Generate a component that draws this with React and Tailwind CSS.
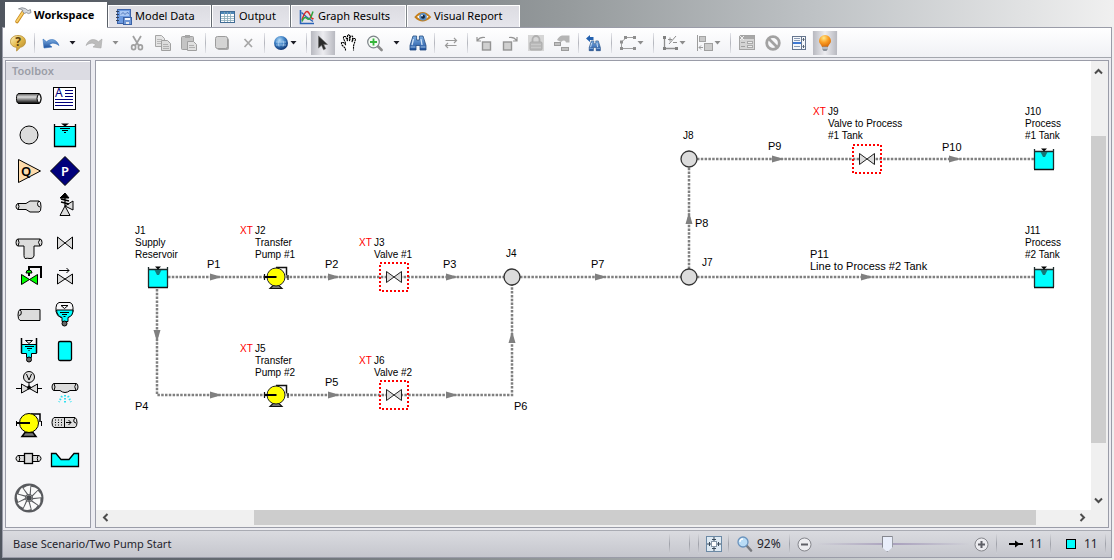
import React from 'react';
import clsx from 'clsx';

// Shared gradients for the toolbar and status bar drawings
const Gradients = () => (
  <svg className="absolute h-0 w-0" aria-hidden="true">
    <defs>
      <linearGradient id="gold" x1="0" y1="0" x2="1" y2="1">
        <stop offset="0" stopColor="#fdf3c0" />
        <stop offset="0.5" stopColor="#e2b84a" />
        <stop offset="1" stopColor="#b0842a" />
      </linearGradient>
      <linearGradient id="blue" x1="0" y1="0" x2="0" y2="1">
        <stop offset="0" stopColor="#7fb0e4" />
        <stop offset="1" stopColor="#1c4f9c" />
      </linearGradient>
      <radialGradient id="globe" cx="0.4" cy="0.3" r="0.7">
        <stop offset="0" stopColor="#b4dcf8" />
        <stop offset="0.5" stopColor="#3f82c6" />
        <stop offset="1" stopColor="#0f3674" />
      </radialGradient>
      <radialGradient id="bulb" cx="0.4" cy="0.25" r="0.75">
        <stop offset="0" stopColor="#ffe98a" />
        <stop offset="0.5" stopColor="#fb9f25" />
        <stop offset="1" stopColor="#d86a08" />
      </radialGradient>
      <linearGradient id="pipe" x1="0" y1="0" x2="0" y2="1">
        <stop offset="0" stopColor="#555555" />
        <stop offset="0.35" stopColor="#dddddd" />
        <stop offset="1" stopColor="#000000" />
      </linearGradient>
    </defs>
  </svg>
);

const Icon = ({ size = 18, children }) => (
  <svg
    width={size}
    height={size}
    viewBox={`0 0 ${size} ${size}`}
    fill="none"
    className="shrink-0"
    aria-hidden="true"
  >
    {children}
  </svg>
);

/* ---------- Tab icons ---------- */

const HammerIcon = () => (
  <Icon>
    <path d="M9.5 5.5L3 15.5" stroke="#c88a1e" strokeWidth="3.6" strokeLinecap="round" />
    <path d="M9.3 5.8L3 15.2" stroke="#f8cf6a" strokeWidth="2" strokeLinecap="round" />
    <path d="M4.5 2.8Q8 0.8 11.5 2.6L14 4.6L16.4 3.6L17 6.6L14.6 7.6L12.4 6.6L10.6 7.4L8.6 5.6L8.8 4.2Q6.6 3 4.5 2.8Z" fill="#d5d8dc" stroke="#7d838a" strokeWidth="0.8" />
  </Icon>
);

const ModelIcon = () => (
  <Icon>
    <rect x="2.5" y="1.5" width="13" height="14" fill="#6d9be0" stroke="#3c62a8" />
    <path d="M1 3.5h3M1 6.5h3M1 9.5h3M1 12.5h3" stroke="#34445f" />
    <rect x="5" y="3" width="9" height="5" fill="#a9c8f4" />
    <path d="M6 6.5l2-2 2 2 2-2 2 1" stroke="#3c62a8" strokeWidth="0.8" />
    <rect x="8.5" y="9.5" width="8" height="7" fill="#6f97d6" stroke="#3a62a6" />
    <rect x="10" y="10" width="5" height="2" fill="#f2f6fd" />
    <rect x="11" y="14" width="3" height="2" fill="#e3e8f0" />
  </Icon>
);

const TableIcon = () => (
  <Icon>
    <rect x="1.5" y="3.5" width="14" height="11" fill="#fdfdff" stroke="#3f6b94" />
    <rect x="2" y="4" width="13" height="2" fill="#4d87b8" />
    <path d="M2 8.5h13M2 10.5h13M2 12.5h13M5.5 4v10M8.5 4v10M11.5 4v10" stroke="#86a9b8" strokeWidth="0.8" />
  </Icon>
);

const GraphIcon = () => (
  <Icon>
    <path d="M2.5 2v13.5H16" stroke="#2a63b8" strokeWidth="1.6" />
    <path d="M3.5 4.5L8 8.5L15 13.5" stroke="#2a63b8" strokeWidth="1.4" />
    <path d="M4 12Q8 -1 11.5 6T15 10" stroke="#d92a2a" strokeWidth="1.5" />
    <path d="M4 13.5Q6 7.5 9 10.5T15 3.5" stroke="#2fa640" strokeWidth="1.5" />
  </Icon>
);

const EyeIcon = () => (
  <Icon>
    <path d="M1.5 9Q8.5 1 16 9Q8.5 16 1.5 9Z" fill="#fff" stroke="#c47f1c" strokeWidth="1.8" />
    <circle cx="9" cy="8.8" r="3.8" fill="#5b8fc4" />
    <circle cx="9" cy="8.8" r="2" fill="#10243c" />
    <circle cx="8" cy="7.6" r="0.9" fill="#fff" />
  </Icon>
);

/* ---------- Toolbar icons ---------- */

const HelpIcon = () => (
  <Icon>
    <path d="M9 1.5C13.5 1.5 16.5 4 16.5 7.6C16.5 11 14 12.8 11.4 13.3L7.6 17L7.8 13.4C4 13 1.5 11 1.5 7.6C1.5 4 4.5 1.5 9 1.5Z" fill="url(#gold)" stroke="#b58a2c" strokeWidth="0.8" />
    <text x="9" y="12" textAnchor="middle" className="fill-[#5c420c] text-[12px] font-bold">?</text>
  </Icon>
);

const UndoIcon = () => (
  <Icon>
    <path d="M1 5l1 9 8-1-2.8-2.2C10 8.4 13 8.6 17 11.5C14.5 4.8 8.5 4 4.6 7.8Z" fill="url(#blue)" stroke="#2f6cb8" strokeWidth="0.6" />
  </Icon>
);

const RedoIcon = () => (
  <Icon>
    <path d="M17 5l-1 9-8-1 2.8-2.2C8 8.4 5 8.6 1 11.5C3.5 4.8 9.5 4 13.4 7.8Z" fill="#bcbcbc" stroke="#a8a8a8" strokeWidth="0.6" />
  </Icon>
);

const CutIcon = () => (
  <Icon>
    <path d="M5 2l5.6 9.4M13 2L7.4 11.4" stroke="#a0a0a0" strokeWidth="1.8" />
    <ellipse cx="5.6" cy="13.2" rx="2" ry="2.4" stroke="#a0a0a0" strokeWidth="1.7" />
    <ellipse cx="12.4" cy="13.2" rx="2" ry="2.4" stroke="#a0a0a0" strokeWidth="1.7" />
  </Icon>
);

const CopyIcon = () => (
  <Icon>
    <path d="M1.5 1.5h6l3 3v8h-9z" fill="#e4e4e4" stroke="#a6a6a6" />
    <path d="M3 5.5h5M3 7.5h5M3 9.5h5" stroke="#b8b8b8" />
    <path d="M7.5 6.5h6l3 3v7h-9z" fill="#dcdcdc" stroke="#a0a0a0" />
    <path d="M9 10.5h5M9 12.5h6M9 14.5h6" stroke="#b0b0b0" />
  </Icon>
);

const PasteIcon = () => (
  <Icon>
    <rect x="1.5" y="2.5" width="12" height="13" rx="1" fill="#c4c4c4" stroke="#a0a0a0" />
    <rect x="5" y="1" width="5" height="3" fill="#a6a6a6" />
    <path d="M7.5 7.5h6l3 3v6h-9z" fill="#e0e0e0" stroke="#a0a0a0" />
    <path d="M9 11.5h5M9 13.5h6" stroke="#b0b0b0" />
  </Icon>
);

const DuplicateIcon = () => (
  <Icon>
    <rect x="4" y="4" width="12" height="12" rx="2" fill="#a8a8a8" />
    <rect x="2.5" y="2.5" width="12" height="12" rx="2" fill="#d4d4d4" stroke="#9c9c9c" />
  </Icon>
);

const DeleteIcon = () => (
  <Icon>
    <path d="M5.5 5l7.5 8M13 5l-7.5 8" stroke="#a6a6a6" strokeWidth="1.7" />
  </Icon>
);

const GlobeIcon = () => (
  <Icon>
    <circle cx="9" cy="9" r="7" fill="url(#globe)" />
    <path d="M4 8h10M4 11h10M7 6.5q-1.5 3 0 6M11 6.5q1.5 3 0 6" stroke="#b4d6f4" strokeWidth="0.7" />
  </Icon>
);

const PointerIcon = () => (
  <Icon>
    <path d="M4.5 2v12l3-2.8 2 4.6 2.2-1-2-4.4h3.8z" fill="#2b2b2b" stroke="#6a6a6a" strokeWidth="0.6" />
  </Icon>
);

const HandIcon = () => (
  <Icon>
    <path d="M5.5 16.5v-2L1.5 10.5V8.5h2L5.5 10.5V9L3.5 4.5V2.5h2L7.5 7V1.5L8.5 .7l1 .8V7l1.3-5h1.4l.6 1-.8 5 1.5-3.5h1.5l.5 1L13.5 12v4.5" fill="#fff" stroke="#000" strokeWidth="1.1" strokeDasharray="2 0.6" />
  </Icon>
);

const ZoomInIcon = () => (
  <Icon>
    <path d="M11.6 12l4 4" stroke="#8a8a8a" strokeWidth="2.6" strokeLinecap="round" />
    <circle cx="7.5" cy="8" r="5.8" fill="#f3fbf3" stroke="#7c8288" strokeWidth="1.2" />
    <path d="M7.5 4.5v7M4 8h7" stroke="#35b53a" strokeWidth="1.8" />
  </Icon>
);

const BinocularShape = () => (
  <>
    <path d="M4 2h3.6v4h2.8V2H14l3 9.5V16h-6v-4.5H7V16H1v-4.5z" fill="url(#blue)" stroke="#21497e" strokeWidth="0.8" />
    <path d="M4.5 5L3 11M12 5l1 6" stroke="#cfe2f7" strokeWidth="1.3" />
    <path d="M1.5 13h5M11.5 13h5" stroke="#9cc0e8" />
  </>
);

const BinocularsIcon = () => (
  <Icon>
    <BinocularShape />
  </Icon>
);

const FindPreviousIcon = () => (
  <Icon>
    <path d="M0 4.5L4 1v2h3.5v3H4v2z" fill="#2462b0" />
    <g transform="translate(2.5 5.5) scale(0.7)">
      <BinocularShape />
    </g>
  </Icon>
);

const SwapIcon = () => (
  <Icon>
    <path d="M3.5 6.5h11M12 4l2.5 2.5L12 9M14.5 11.5h-11M6 9l-2.5 2.5L6 14" stroke="#9a9a9a" strokeWidth="1.2" />
  </Icon>
);

const RotateLeftIcon = () => (
  <Icon>
    <rect x="7.5" y="8" width="8" height="8" fill="#d0d0d0" stroke="#949494" strokeWidth="1.4" />
    <path d="M2 3v4h4M2.5 6.5Q5 2.5 10 3.5" stroke="#949494" strokeWidth="1.2" />
  </Icon>
);

const RotateRightIcon = () => (
  <Icon>
    <rect x="2.5" y="8" width="8" height="8" fill="#d0d0d0" stroke="#949494" strokeWidth="1.4" />
    <path d="M16 3v4h-4M15.5 6.5Q13 2.5 8 3.5" stroke="#949494" strokeWidth="1.2" />
  </Icon>
);

const LockIcon = () => (
  <Icon>
    <rect x="1" y="1" width="16" height="16" fill="#d6d6d6" />
    <path d="M5.5 8V5.5a3.5 3.5 0 0 1 7 0V8" stroke="#b0b0b0" strokeWidth="1.8" />
    <rect x="3" y="8" width="12" height="8" rx="1" fill="#bababa" stroke="#aaaaaa" />
    <path d="M4 10.5h10M4 13.5h10" stroke="#c8c8c8" />
  </Icon>
);

const ReorderIcon = () => (
  <Icon>
    <path d="M4 6Q6 2 9 1.5h7.5v7h-3.5Q12 5 8 8z" fill="#b4b4b4" />
    <rect x="1.5" y="8.5" width="6" height="3" fill="#c0c0c0" stroke="#9c9c9c" />
    <rect x="8.5" y="13.5" width="7" height="3" fill="#c0c0c0" stroke="#9c9c9c" />
  </Icon>
);

const PolylineIcon = () => (
  <Icon>
    <path d="M15 3.5H7.5L2.5 8v6.5H15" stroke="#a0a0a0" />
    <path d="M5 2h3v3H5zM14 2h3v3h-3zM1 6.5h3v3H1zM1 13h3v3H1zM14 13h3v3h-3z" fill="#8e8e8e" />
  </Icon>
);

const AxesIcon = () => (
  <Icon>
    <path d="M3.5 3v11.5H15" stroke="#8e8e8e" strokeWidth="1.3" />
    <path d="M2 2h3v3H2zM2 13h3v3H2zM14 13h3v3h-3z" fill="#808080" />
    <path d="M7 5.5h4M9 3.5v4M15 2L8 10M12 8.5h4" stroke="#8e8e8e" />
  </Icon>
);

const AlignIcon = () => (
  <Icon>
    <path d="M1.5 1v16" stroke="#9c9c9c" />
    <rect x="3.5" y="2.5" width="6" height="5" fill="#c8c8c8" stroke="#a4a4a4" />
    <rect x="8.5" y="9.5" width="8" height="7" fill="#cccccc" stroke="#a0a0a0" />
    <path d="M3 13.5h4M5 11.5l-2 2 2 2" stroke="#9c9c9c" />
  </Icon>
);

const PropertiesIcon = () => (
  <Icon>
    <rect x="1.5" y="1.5" width="15" height="14" fill="#d4d4d4" stroke="#a4a4a4" />
    <path d="M2 3.5h14" stroke="#a8a8a8" strokeWidth="3" />
    <path d="M1 1l5 5M6 2L2 6" stroke="#eeeeee" />
    <path d="M3 8.5h4M3 12.5h4" stroke="#a0a0a0" />
    <rect x="9.5" y="7.5" width="5" height="2" fill="#eee" stroke="#aaa" />
    <rect x="9.5" y="11.5" width="5" height="2" fill="#eee" stroke="#aaa" />
  </Icon>
);

const BanIcon = () => (
  <Icon>
    <circle cx="9" cy="9" r="6.3" stroke="#a2a2a2" strokeWidth="2.8" />
    <path d="M5 5l8 8" stroke="#a2a2a2" strokeWidth="2.6" />
  </Icon>
);

const ListIcon = () => (
  <Icon>
    <rect x="2.5" y="2.5" width="13" height="13" fill="#f6f8fb" stroke="#66768e" />
    <path d="M11.5 3v12" stroke="#66768e" />
    <path d="M4 4.5h6M4 6.5h6M4 12.5h6" stroke="#8a9bb4" />
    <path d="M3 9h8" stroke="#3f7ad4" strokeWidth="2" />
    <path d="M13.5 4v3M13.5 11v3M12.5 5.5h2M12.5 12.5h2" stroke="#54606f" />
  </Icon>
);

const BulbIcon = () => (
  <Icon>
    <path d="M9 1a6 6 0 0 1 6 6c0 2.6-2.6 3.6-3 6H6c-.4-2.4-3-3.4-3-6a6 6 0 0 1 6-6z" fill="url(#bulb)" />
    <path d="M6.5 12.5h5v3l-1 1.5h-3l-1-1.5z" fill="#8c929a" />
    <path d="M7 14h4" stroke="#dfe2e6" />
  </Icon>
);

/* ---------- Toolbox symbols, drawn on a 36px cell ---------- */

const symbols = [
  {
    name: 'Pipe',
    draw: (
      <>
        <path d="M8 13.5h20q2 0 2 5t-2 5H8q-2.5 0-2.5-5t2.5-5z" fill="url(#pipe)" />
        <ellipse cx="28" cy="18.5" rx="2" ry="4" fill="#eee" />
      </>
    ),
  },
  {
    name: 'Annotation',
    draw: (
      <>
        <rect x="6.5" y="7.5" width="22" height="22" fill="#fff" />
        <path d="M18 10.5h8M18 13.5h8M18 16.5h8M8 19.5h18M8 22.5h18M8 25.5h18" stroke="#00007b" />
        <text x="8" y="17" stroke="none" className="fill-[#00007b] text-[12px]">A</text>
      </>
    ),
  },
  { name: 'Branch', draw: <circle cx="18" cy="19" r="9" fill="#dcdcdc" /> },
  {
    name: 'Reservoir',
    draw: (
      <>
        <path d="M7.5 10.5h21v20h-21z" fill="#0ff" />
        <path d="M7.5 8v22.5h21V8" strokeWidth="1.3" />
        <path d="M14 7.5h8l-4 3z" fill="#000" stroke="none" />
        <path d="M13 12.5h10M15 14.5h6M17 16.5h2" />
      </>
    ),
  },
  {
    name: 'Assigned Flow',
    draw: (
      <>
        <path d="M7.5 7.5v23L29.5 19z" fill="#ffdcac" />
        <text x="10" y="24" stroke="none" className="fill-black text-[13px] font-semibold">Q</text>
      </>
    ),
  },
  {
    name: 'Assigned Pressure',
    draw: (
      <>
        <path d="M18 4.5L32.5 19 18 33.5 3.5 19z" fill="#00007b" />
        <text x="14" y="24" stroke="none" className="fill-white text-[13px] font-semibold">P</text>
      </>
    ),
  },
  {
    name: 'Area Change',
    draw: (
      <path d="M7 15.5h8l4-2.5h9q2 0 2 5.5t-2 5.5h-9l-4-2.5H7q-2-.5-2-3t2-3zM7 15.5q2 3 0 6M28 13q-2.5 2-1 5l2 1" fill="#dcdcdc" />
    ),
  },
  {
    name: 'Relief Valve',
    draw: (
      <>
        <path d="M18 18l-5 9.5h10zM18 18l8-5v9z" fill="#dcdcdc" />
        <path d="M18 6v12M14 11l8 2M14 14l8 2" strokeWidth="1.3" />
        <path d="M13 10l5-5 4 5z" fill="#000" />
      </>
    ),
  },
  {
    name: 'Tee or Wye',
    draw: (
      <path d="M7 15h22q2 0 2 3.5t-2 3.5h-6v10q-1 3-4 2.5t-5 0q-1-1-1-3v-9.5H7q-2 0-2-3.5t2-3.5zM7 15q2 3.5 0 7M29 15q-3 3 0 7" fill="#dcdcdc" />
    ),
  },
  { name: 'Valve', draw: <path d="M10.5 13l15 12V13l-15 12z" fill="#dcdcdc" /> },
  {
    name: 'Control Valve',
    draw: (
      <>
        <path d="M10.5 14.5l16 10v-10l-16 10z" fill="#0f0" />
        <path d="M18 16V7h12v11" strokeWidth="2" />
        <path d="M15 13q0-3 3-3t3 3z" fill="#0f0" />
      </>
    ),
  },
  {
    name: 'Check Valve',
    draw: (
      <>
        <path d="M10.5 14l15 10V14l-15 10z" fill="#dcdcdc" />
        <path d="M12 10.5h10M19.5 8l2.5 2.5-2.5 2.5" />
      </>
    ),
  },
  {
    name: 'Dead End',
    draw: (
      <path d="M9 13.5h20v11H9q-2-1-2-5.5t2-5.5zM9 13.5q2 2 1 5l-2 1" fill="#dcdcdc" />
    ),
  },
  {
    name: 'Gas Accumulator',
    draw: (
      <>
        <path d="M12 6.5h11q3 1 3 5v4q-1 5-5 6h-7q-4-1-5-6v-4q0-4 3-5z" fill="#f6f6f8" />
        <path d="M9.5 14h16.5q0 6-5 7.5v4h-6v-4q-5-1.5-5.5-7.5z" fill="#0ff" />
        <path d="M14 9.5h7l-3.5 3zM13 16.5h9M15 18.5h5M16.5 20.5h2" />
        <circle cx="17.5" cy="27.5" r="2.5" fill="#666" />
      </>
    ),
  },
  {
    name: 'Surge Tank',
    draw: (
      <>
        <path d="M10.5 12.5h15v9h-5v4h-5v-4h-5z" fill="#0ff" />
        <path d="M10.5 6v15M25.5 6v15" strokeWidth="1.5" />
        <path d="M14.5 8.5h7l-3.5 3zM14 14.5h9M16 16.5h5M17.5 18.5h1" />
        <circle cx="18" cy="27.5" r="2.5" fill="#666" />
      </>
    ),
  },
  { name: 'Liquid Accumulator', draw: <rect x="11.5" y="9.5" width="13" height="19" rx="1.5" fill="#0ff" strokeWidth="1.3" /> },
  {
    name: 'Vacuum Breaker Valve',
    draw: (
      <>
        <circle cx="18" cy="9" r="5.5" fill="#dcdcdc" />
        <path d="M15.5 6l2.5 6 2.5-6M18 15v5M5 20.5h26" />
        <path d="M10.5 16l16 9v-9l-16 9z" fill="#dcdcdc" />
        <circle cx="18" cy="19.5" r="1.5" fill="#000" />
      </>
    ),
  },
  {
    name: 'Spray Discharge',
    draw: (
      <>
        <path d="M7 15.5h22q2 0 2 3.5t-2 3.5h-6q-5 4-10 0H7q-2 0-2-3.5t2-3.5zM7 15.5q2 3.5 0 7M29 15.5q-2.5 3 0 7" fill="#dcdcdc" />
        <path d="M18 27v8M15 28l-3 6M21 28l3 6" stroke="#2fe0f0" strokeWidth="2" strokeDasharray="1.5 1.5" />
      </>
    ),
  },
  {
    name: 'Pump',
    draw: (
      <>
        <path d="M11 32.5l3-4h8l3 4z" fill="#777" strokeWidth="1.5" />
        <path d="M20 10h9v8" strokeWidth="1.5" />
        <circle cx="18" cy="19" r="9.5" fill="#ff0" />
        <path d="M5 19h14" strokeWidth="2" />
        <path d="M5.5 17v5M30.5 17v5" />
      </>
    ),
  },
  {
    name: 'Screen',
    draw: (
      <>
        <path d="M7 13.5h21q2 1 2 5t-2 5H7q-2-1-2-5t2-5zM17.5 13.5v10M19 18.5h5M21.5 16l2.5 2.5-2.5 2.5M28 14q-2 2-1 4l2 1" fill="#dcdcdc" />
        <path d="M8 16h9M8 18.5h9M8 21h9" strokeDasharray="1 2" />
      </>
    ),
  },
  {
    name: 'General Component',
    draw: (
      <>
        <path d="M7 15.5h21q2 1 2 3t-2 3H7q-2-1-2-3t2-3zM8 15.5q1.5 3 0 6M27 15.5q-1.5 3 0 6" fill="#dcdcdc" />
        <rect x="13.5" y="13.5" width="8" height="10" fill="#dcdcdc" strokeWidth="1.3" />
      </>
    ),
  },
  { name: 'Weir', draw: <path d="M4.5 13.5H9l5 6h8l5-6h4.5v13h-27z" fill="#0ff" strokeWidth="1.3" /> },
];

const blades = [0, 40, 80, 120, 160, 200, 240, 280, 320];

const FanIcon = () => (
  <Icon size={36}>
    <circle cx="18" cy="18" r="14.5" fill="#585a5e" />
    {blades.map((angle) => (
      <path key={angle} d="M17 14L12.5 8Q15.500 5.500 19.500 5.500L18.600 14z" fill="#fafafa" transform={`rotate(${angle} 18 18)`} />
    ))}
    <circle cx="18" cy="18" r="3" fill="#46484c" stroke="#999" strokeWidth="0.8" />
  </Icon>
);

/* ---------- Model ---------- */

const wires = [
  'M168 277H504',
  'M157 289V395H512V285',
  'M520 277H681',
  'M697 277H1034',
  'M689 269V167',
  'M697 159H1034',
];

// x, y is the middle of the arrow head
const arrows = [
  [216, 277, 0], [334, 277, 0], [452, 277, 0], [601, 277, 0], [867, 277, 0],
  [216, 395, 0], [334, 395, 0], [452, 395, 0], [778, 159, 0], [955, 159, 0],
  [157, 336, 90], [512, 337, 270], [689, 218, 270],
];

const junctions = [
  { type: 'tank', x: 158, y: 277, labelX: 135, labelY: 234, lines: ['J1', 'Supply', 'Reservoir'] },
  { type: 'pump', x: 276, y: 277, labelX: 255, labelY: 234, lines: ['J2', 'Transfer', 'Pump #1'], xt: true },
  { type: 'valve', x: 394, y: 277, labelX: 374, labelY: 246, lines: ['J3', 'Valve #1'], xt: true },
  { type: 'branch', x: 512, y: 277, labelX: 506, labelY: 257, lines: ['J4'] },
  { type: 'pump', x: 276, y: 395, labelX: 255, labelY: 352, lines: ['J5', 'Transfer', 'Pump #2'], xt: true },
  { type: 'valve', x: 394, y: 395, labelX: 374, labelY: 364, lines: ['J6', 'Valve #2'], xt: true },
  { type: 'branch', x: 689, y: 277, labelX: 702, labelY: 266, lines: ['J7'] },
  { type: 'branch', x: 689, y: 159, labelX: 683, labelY: 139, lines: ['J8'] },
  { type: 'valve', x: 867, y: 159, labelX: 828, labelY: 115, lines: ['J9', 'Valve to Process', '#1 Tank'], xt: true },
  { type: 'tank', x: 1044, y: 159, labelX: 1025, labelY: 115, lines: ['J10', 'Process', '#1 Tank'] },
  { type: 'tank', x: 1044, y: 277, labelX: 1025, labelY: 234, lines: ['J11', 'Process', '#2 Tank'] },
];

const pipeLabels = [
  { x: 207, y: 268, lines: ['P1'] },
  { x: 325, y: 268, lines: ['P2'] },
  { x: 443, y: 268, lines: ['P3'] },
  { x: 135, y: 410, lines: ['P4'] },
  { x: 325, y: 386, lines: ['P5'] },
  { x: 514, y: 410, lines: ['P6'] },
  { x: 591, y: 268, lines: ['P7'] },
  { x: 695, y: 227, lines: ['P8'] },
  { x: 768, y: 150, lines: ['P9'] },
  { x: 942, y: 151, lines: ['P10'] },
  { x: 810, y: 258, lines: ['P11', 'Line to Process #2 Tank'] },
];

const shapes = {
  tank: (
    <>
      <path d="M-9.5 -7.5h19v17.5h-19z" fill="#0ff" />
      <path d="M-9.5 -10v20M9.5 -10v20M-9.5 -7.5h19" stroke="#1c2c2c" strokeWidth="1.3" />
      <path d="M-10 10.5h20" stroke="#111" strokeWidth="1.5" />
      <path d="M-3 -10.5h6l-3 3z" fill="#000" />
      <path d="M-3.5 -7h7l-2.5 5h-2z" fill="#147878" />
    </>
  ),
  pump: (
    <>
      <path d="M-6 11.5l3-3h6l3 3z" fill="#777" stroke="#111" strokeWidth="1.2" />
      <path d="M0 -9.5h10.5v8" stroke="#111" strokeWidth="1.5" fill="none" />
      <circle r="9" fill="#ff0" stroke="#222" />
      <path d="M-11 0h11.5" stroke="#000" strokeWidth="2" />
      <path d="M-11.5 -3v6M12 -2v5" stroke="#111" strokeWidth="1.2" />
    </>
  ),
  valve: (
    <>
      <rect x="-14" y="-14" width="28" height="28" fill="none" stroke="#f00" strokeWidth="2" strokeDasharray="2 2" />
      <rect x="-8" y="-6" width="16" height="12" fill="#fff" />
      <path d="M-7.5 -5.5L7.5 5.5V-5.5L-7.5 5.5z" fill="#dcdcdc" stroke="#222" />
    </>
  ),
  branch: <circle r="8" fill="#dcdcdc" stroke="#333" strokeWidth="1.3" />,
};

const Label = ({ x, y, lines }) => (
  <text x={x} y={y}>
    {lines.map((line, index) => (
      <tspan key={index} x={x} y={y + index * 12}>
        {line}
      </tspan>
    ))}
  </text>
);

const Diagram = () => (
  <svg
    width="994"
    height="448"
    viewBox="96 61 994 448"
    className="block fill-black font-['Liberation_Sans',sans-serif] text-[10px]"
    role="img"
    aria-label="Pipe network"
  >
    {wires.map((d) => (
      <path key={d} d={d} fill="none" stroke="#808080" strokeWidth="2.5" strokeDasharray="2.5 1.3" />
    ))}
    {arrows.map(([x, y, angle], index) => (
      <path key={index} d="M-6 -3.5L6 0L-6 3.5z" fill="#808080" transform={`translate(${x} ${y}) rotate(${angle})`} />
    ))}
    {junctions.map((junction) => (
      <g key={junction.lines[0]}>
        <g transform={`translate(${junction.x} ${junction.y})`}>{shapes[junction.type]}</g>
        {junction.xt && (
          <text x={junction.labelX - 15} y={junction.labelY} className="fill-[#ff0000]">XT</text>
        )}
        <Label x={junction.labelX} y={junction.labelY} lines={junction.lines} />
      </g>
    ))}
    <g className="text-[11px]">
      {pipeLabels.map((label) => (
        <Label key={label.lines[0]} {...label} />
      ))}
    </g>
  </svg>
);

/* ---------- Window parts ---------- */

const tabs = [
  { title: 'Workspace', icon: HammerIcon, width: 'w-[102px]', active: true },
  { title: 'Model Data', icon: ModelIcon, width: 'w-[103px]' },
  { title: 'Output', icon: TableIcon, width: 'w-[78px]' },
  { title: 'Graph Results', icon: GraphIcon, width: 'w-[115px]' },
  { title: 'Visual Report', icon: EyeIcon, width: 'w-[113px]' },
];

const TabBar = () => (
  <nav className="relative z-10 flex h-7 items-end gap-px pl-[3px]" role="tablist">
    {tabs.map((tab) => {
      const TabIcon = tab.icon;
      return (
        <button
          key={tab.title}
          type="button"
          role="tab"
          aria-selected={Boolean(tab.active)}
          className={clsx(
            'flex items-center gap-0.5 whitespace-nowrap text-black',
            tab.width,
            tab.active
              ? 'h-[26px] bg-white pl-[9px] font-bold'
              : 'mb-px h-[22px] border border-b-0 border-white bg-linear-to-b from-[#dcdce2] to-[#e6e6ec] pl-1.5'
          )}
        >
          <TabIcon />
          {tab.title}
        </button>
      );
    })}
  </nav>
);

const Caret = ({ disabled }) => (
  <svg width="7" height="4" viewBox="0 0 7 4" className="shrink-0" aria-hidden="true">
    <path d="M0.5 0h6l-3 3.5z" fill={disabled ? '#8c8c8c' : '#1c1c24'} />
  </svg>
);

const tools = [
  { label: 'Help', icon: HelpIcon },
  'separator',
  { label: 'Undo', icon: UndoIcon },
  { label: 'Undo list', caret: true },
  { label: 'Redo', icon: RedoIcon, disabled: true },
  { label: 'Redo list', caret: true, disabled: true },
  { label: 'Cut', icon: CutIcon, disabled: true },
  { label: 'Copy', icon: CopyIcon, disabled: true },
  { label: 'Paste', icon: PasteIcon, disabled: true },
  'separator',
  { label: 'Duplicate', icon: DuplicateIcon, disabled: true },
  { label: 'Delete', icon: DeleteIcon, disabled: true },
  'separator',
  { label: 'Global edit', icon: GlobeIcon, caret: true },
  'separator',
  { label: 'Select', icon: PointerIcon, pressed: true },
  { label: 'Pan', icon: HandIcon },
  { label: 'Zoom', icon: ZoomInIcon },
  { label: 'Zoom list', caret: true },
  { label: 'Find', icon: BinocularsIcon },
  'separator',
  { label: 'Reverse direction', icon: SwapIcon, disabled: true },
  'separator',
  { label: 'Rotate left', icon: RotateLeftIcon, disabled: true },
  { label: 'Rotate right', icon: RotateRightIcon, disabled: true },
  { label: 'Lock', icon: LockIcon, disabled: true },
  { label: 'Renumber', icon: ReorderIcon, disabled: true },
  'separator',
  { label: 'Find previous', icon: FindPreviousIcon },
  'separator',
  { label: 'Segments', icon: PolylineIcon, caret: true, disabled: true },
  'separator',
  { label: 'Axes', icon: AxesIcon, caret: true, disabled: true },
  { label: 'Align', icon: AlignIcon, caret: true, disabled: true },
  'separator',
  { label: 'Properties', icon: PropertiesIcon, disabled: true },
  { label: 'Special conditions', icon: BanIcon, disabled: true },
  { label: 'Inspect list', icon: ListIcon },
  { label: 'Highlight', icon: BulbIcon, pressed: true },
];

const Toolbar = () => (
  <div className="flex h-[30px] items-center border-b border-[#a4a7ae] bg-linear-to-b from-white to-[#f0f1f5] pl-0.5" role="toolbar">
    {tools.map((tool, index) => {
      if (tool === 'separator') {
        return (
          <div key={index} className="flex w-[7px] shrink-0 justify-center">
            <div className="h-5 w-px bg-linear-to-b from-[#e4e5ea] via-[#b4b6bd] to-[#e4e5ea]" />
          </div>
        );
      }
      const ToolIcon = tool.icon;
      return (
        <button
          key={index}
          type="button"
          aria-label={tool.label}
          disabled={tool.disabled}
          className={clsx(
            'flex h-6 shrink-0 items-center',
            tool.icon && tool.caret && 'w-[35px] pl-1',
            tool.icon && !tool.caret && 'w-[26px] justify-center',
            !tool.icon && 'w-[17px] justify-center',
            tool.pressed && 'border-x border-[#f4f4f7] bg-linear-to-r from-[#b8b9c0] via-[#ededf1] to-[#b8b9c0]'
          )}
        >
          {ToolIcon && <ToolIcon />}
          {tool.caret && <Caret disabled={tool.disabled} />}
        </button>
      );
    })}
  </div>
);

const Toolbox = () => (
  <aside className="w-[86px] shrink-0 overflow-hidden border border-[#9a9ca8] bg-[#f6f6f8]">
    <h2 className="h-[19px] border-t border-white bg-[#dcdce3] pl-1.5 leading-[18px] font-semibold text-[#9a9ca6]">
      Toolbox
    </h2>
    <div className="grid grid-cols-[36px_36px] pl-[5px]">
      {symbols.map((symbol) => (
        <button key={symbol.name} type="button" aria-label={symbol.name} className="h-9 w-9">
          <svg width="36" height="36" viewBox="0 0 36 36" fill="none" stroke="#000" aria-hidden="true">
            {symbol.draw}
          </svg>
        </button>
      ))}
      <button type="button" aria-label="Turbine" className="flex h-11 w-9 items-center">
        <FanIcon />
      </button>
    </div>
  </aside>
);

const Chevron = ({ d }) => (
  <svg width="9" height="9" viewBox="0 0 9 9" fill="none" stroke="#4c4c4c" strokeWidth="2" aria-hidden="true">
    <path d={d} />
  </svg>
);

const Canvas = () => (
  <main className="grid min-w-0 flex-1 grid-cols-[minmax(0,1fr)_16px] grid-rows-[minmax(0,1fr)_16px] border border-[#9a9ca8] bg-[#f0f0f0] pr-px pb-px">
    <div className="overflow-hidden bg-white">
      <Diagram />
    </div>
    <div className="flex flex-col">
      <button type="button" aria-label="Scroll up" className="flex h-5 w-[15px] items-center justify-center">
        <Chevron d="M1 6.5L4.5 3L8 6.5" />
      </button>
      <div className="grow-[55]" />
      <div className="w-[15px] grow-[307] bg-[#cdcdcd]" />
      <div className="grow-[47]" />
      <button type="button" aria-label="Scroll down" className="flex h-5 w-[15px] items-center justify-center">
        <Chevron d="M1 2.5L4.5 6L8 2.5" />
      </button>
    </div>
    <div className="flex">
      <button type="button" aria-label="Scroll left" className="flex h-[15px] w-[18px] items-center justify-center">
        <Chevron d="M6.5 1L3 4.5L6.5 8" />
      </button>
      <div className="grow-[140]" />
      <div className="h-[15px] grow-[782] bg-[#cdcdcd]" />
      <div className="grow-[37]" />
      <button type="button" aria-label="Scroll right" className="flex h-[15px] w-[18px] items-center justify-center">
        <Chevron d="M2.5 1L6 4.5L2.5 8" />
      </button>
    </div>
  </main>
);

const StatusSeparator = () => (
  <div className="h-5 w-px shrink-0 bg-linear-to-b from-[#d4d5da] via-[#9fa1a9] to-[#cfd0d6]" />
);

const RoundButton = ({ label, d }) => (
  <button type="button" aria-label={label} className="shrink-0">
    <svg width="15" height="15" viewBox="0 0 15 15" className="block" aria-hidden="true">
      <circle cx="7.5" cy="7.5" r="6.5" fill="#ececf0" stroke="#85868c" />
      <path d={d} stroke="#5e5f66" strokeWidth="2" />
    </svg>
  </button>
);

const StatusBar = () => (
  <footer className="flex h-[27px] items-center border-t border-[#a9abb3] bg-linear-to-b from-[#dadbe0] to-[#c5c6cd] text-[#24242c]">
    <span className="flex-1 truncate pl-2.5">Base Scenario/Two Pump Start</span>
    <StatusSeparator />
    <div className="w-[19px] shrink-0" />
    <StatusSeparator />
    <div className="w-2 shrink-0" />
    <StatusSeparator />
    <button type="button" aria-label="Fit to window" className="flex w-[29px] shrink-0 items-center justify-center">
      <svg width="16" height="16" viewBox="0 0 16 16" fill="none" aria-hidden="true">
        <rect x="0.5" y="0.5" width="15" height="15" fill="#dfeaf3" stroke="#6b89a5" />
        <rect x="5.5" y="5.5" width="5" height="5" fill="#fff" stroke="#8797a8" />
        <path d="M8 1v4M6 3.5h4M8 11v4M6 12.5h4M1 8h4M3.5 6v4M11 8h4M12.5 6v4" stroke="#39495a" />
      </svg>
    </button>
    <StatusSeparator />
    <div className="flex w-[60px] shrink-0 items-center gap-1 pl-2 text-xs">
      <svg width="16" height="16" viewBox="0 0 16 16" fill="none" aria-hidden="true">
        <path d="M9.5 9.5l4.5 5" stroke="#77797e" strokeWidth="2.6" strokeLinecap="round" />
        <circle cx="6" cy="6" r="5" fill="#b9dcf6" stroke="#6b93bd" strokeWidth="1.3" />
        <path d="M3 6q0-3 3-3" stroke="#fff" strokeWidth="1.3" />
      </svg>
      92%
    </div>
    <StatusSeparator />
    <div className="flex w-[206px] shrink-0 items-center justify-between px-[7px]">
      <RoundButton label="Zoom out" d="M4 7.5h7" />
      <input
        type="range"
        min="0"
        max="200"
        defaultValue="92"
        aria-label="Zoom level"
        className="h-5 w-[154px] appearance-none bg-transparent [&::-webkit-slider-runnable-track]:h-[2px] [&::-webkit-slider-runnable-track]:bg-linear-to-r [&::-webkit-slider-runnable-track]:from-transparent [&::-webkit-slider-runnable-track]:via-[#a9a0bd] [&::-webkit-slider-runnable-track]:to-transparent [&::-webkit-slider-thumb]:-mt-[7px] [&::-webkit-slider-thumb]:h-4 [&::-webkit-slider-thumb]:w-[11px] [&::-webkit-slider-thumb]:appearance-none [&::-webkit-slider-thumb]:border [&::-webkit-slider-thumb]:border-[#85878f] [&::-webkit-slider-thumb]:bg-[#e9eefb] [&::-webkit-slider-thumb]:[clip-path:polygon(0_0,100%_0,100%_68%,50%_100%,0_68%)]"
      />
      <RoundButton label="Zoom in" d="M4 7.5h7M7.5 4v7" />
    </div>
    <StatusSeparator />
    <div className="flex w-[53px] shrink-0 items-center gap-1.5 pl-3 text-xs">
      <svg width="14" height="8" viewBox="0 0 14 8" aria-hidden="true">
        <path d="M0 4h14" stroke="#000" strokeWidth="2" />
        <path d="M6 0.5v7l5-3.5z" fill="#000" />
      </svg>
      11
    </div>
    <StatusSeparator />
    <div className="flex w-[54px] shrink-0 items-center gap-2 pl-[15px] text-xs">
      <div className="h-2.5 w-2.5 border border-black bg-[#00ffff]" />
      11
    </div>
    <StatusSeparator />
    <div className="w-[5px] shrink-0" />
  </footer>
);

const App = () => {
  return (
    <div className="flex h-screen flex-col bg-[linear-gradient(to_right,#50565f_0%,#6a7076_25%,#94999b_50%,#bec2c5_73%,#f0f0f0_100%)] px-0.5 pb-0.5 font-['Noto_Sans',sans-serif] text-[11px]">
      <Gradients />
      <TabBar />
      <div className="-mt-px flex min-h-0 flex-1 flex-col border border-[#9a9ca8] bg-[#ececf1]">
        <Toolbar />
        <div className="flex min-h-0 flex-1 gap-1 p-0.5">
          <Toolbox />
          <Canvas />
        </div>
        <StatusBar />
      </div>
    </div>
  );
};

export default App;
